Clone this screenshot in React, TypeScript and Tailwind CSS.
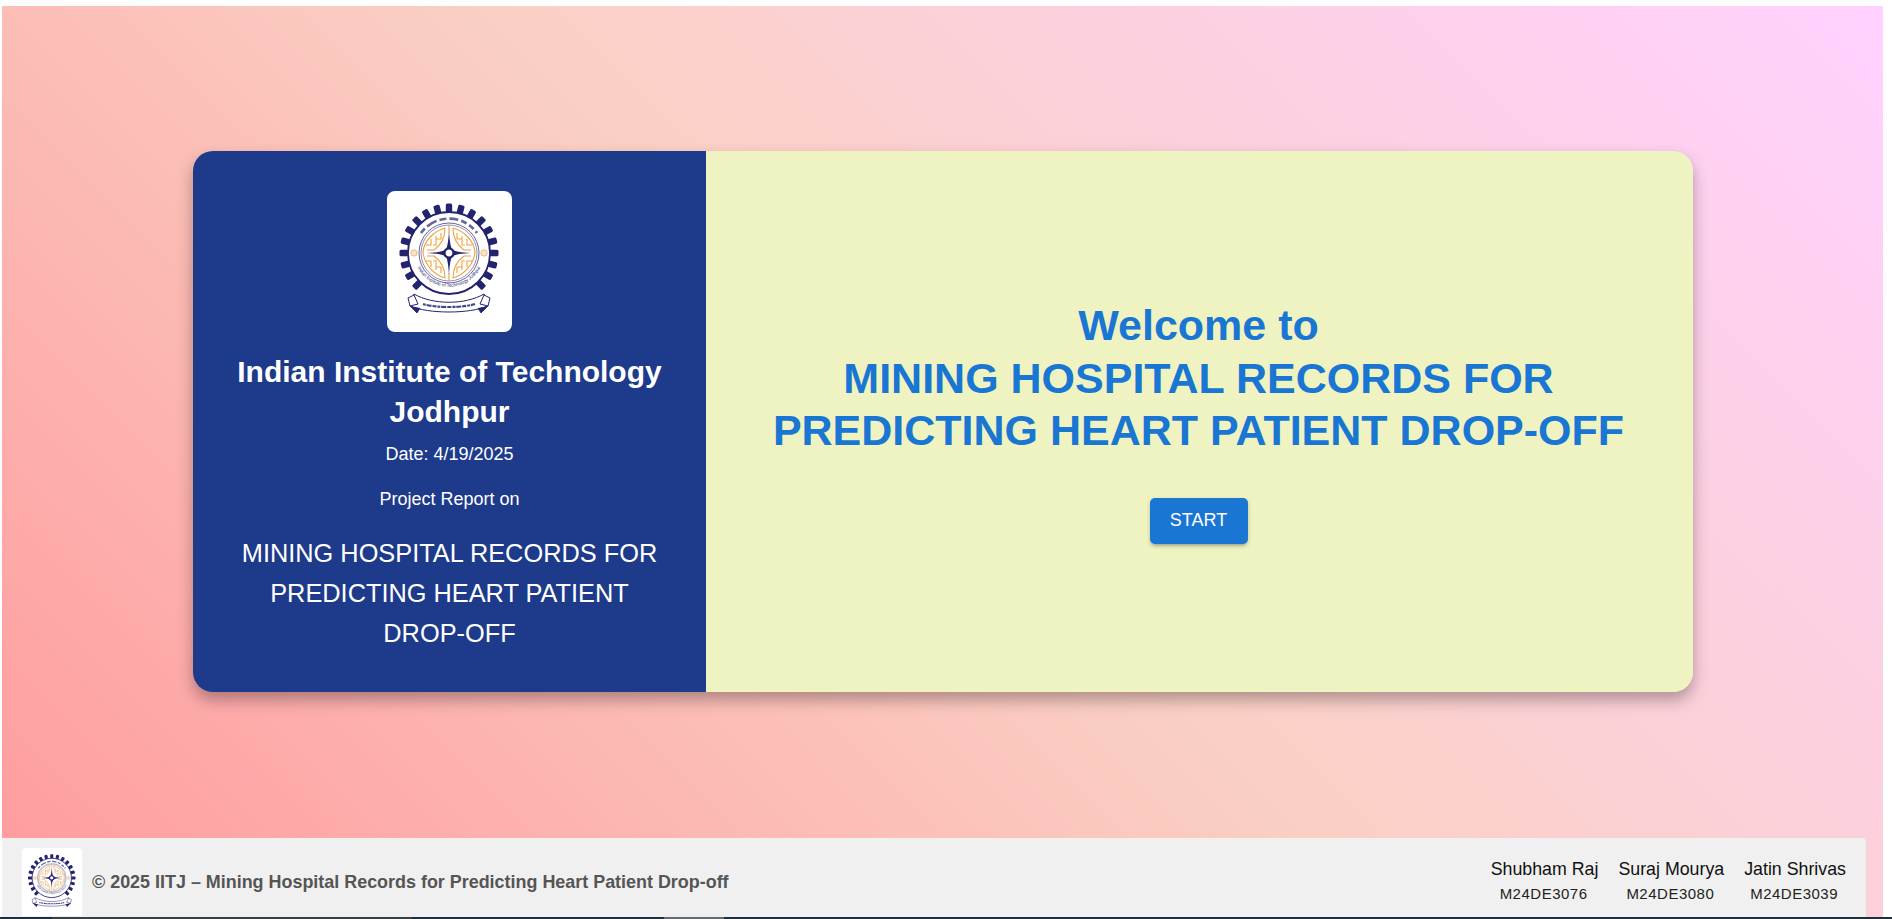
const students = [
  { name: 'Shubham Raj', roll: 'M24DE3076' },
  { name: 'Suraj Mourya', roll: 'M24DE3080' },
  { name: 'Jatin Shrivas', roll: 'M24DE3039' },
]

const teeth = Array.from({ length: 24 }, (_, i) => i * 15).filter((a) => a < 150 || a > 210)

function Logo({ id }: { id: string }) {
  return (
    <svg viewBox="0 0 125 141" className="h-full w-full">
      <g transform="translate(62 62)">
        {teeth.map((angle) => (
          <rect key={angle} x="-3.2" y="-49.5" width="6.4" height="9" rx="1.5" fill="#23236f" transform={`rotate(${angle})`} />
        ))}
        <circle r="41" fill="#fff" stroke="#23236f" strokeWidth="1.8" />
        <circle r="30" fill="none" stroke="#23236f" strokeWidth="0.7" />
        <circle r="28" fill="none" stroke="#23236f" strokeWidth="0.5" />
        <path d="M-28 -20A34.4 34.4 0 0 1 28 -20" fill="none" stroke="#23236f" strokeWidth="2.6" strokeDasharray="6 3 11 3 7 3 9 3 6 3" opacity="0.7" />
        <path id={id} d="M-32 13A35 35 0 0 0 32 13" fill="none" />
        <text fontSize="4.6" fill="#23236f" fontFamily="Liberation Sans, sans-serif">
          <textPath href={`#${id}`} startOffset="50%" textAnchor="middle">
            Indian Institute of Technology Jodhpur
          </textPath>
        </text>
        <circle cx="-35" r="3.2" fill="#fbe3c4" stroke="#d9a05a" strokeWidth="0.6" />
        <circle cx="35" r="3.2" fill="#fbe3c4" stroke="#d9a05a" strokeWidth="0.6" />
        <g fill="none" stroke="#f0a03c" strokeWidth="1.1">
          <path d="M-4 -25C-15 -22 -25 -12 -26 -1C-25 11 -15 22 -4 25C-4 16 -8 8 -15 3H-22M-4 -25C-4 -16 -8 -8 -15 -3H-22" />
          <path d="M-8 -20V-14H-13V-9M-13 -17V-13M-18 -14V-8H-23M-12 -8H-16M-8 20V14H-13V9M-13 17V13M-18 14V8H-23M-12 8H-16" />
          <path d="M4 -25C15 -22 25 -12 26 -1C25 11 15 22 4 25C4 16 8 8 15 3H22M4 -25C4 -16 8 -8 15 -3H22" />
          <path d="M8 -20V-14H13V-9M13 -17V-13M18 -14V-8H23M12 -8H16M8 20V14H13V9M13 17V13M18 14V8H23M12 8H16" />
          <path d="M0 -28V-20M0 28V20" stroke="#d9a05a" />
        </g>
        <path d="M0 -22C0.8 -10 2 -4 3.5 -3.5C5 -1.5 12 -0.6 22 0C12 0.6 5 1.5 3.5 3.5C2 4 0.8 10 0 22C-0.8 10 -2 4 -3.5 3.5C-5 1.5 -12 0.6 -22 0C-12 -0.6 -5 -1.5 -3.5 -3.5C-2 -4 -0.8 -10 0 -22Z" fill="#23236f" />
        <circle r="4.6" fill="#fff" stroke="#23236f" strokeWidth="2.4" />
      </g>
      <path d="M27 103C46 114 78 114 97 103L101 115C82 123 42 123 23 115Z" fill="#fff" stroke="#23236f" strokeWidth="1" />
      <path d="M27 104L21 107L23 115L31 113ZM97 104L103 107L101 115L93 113Z" fill="#fff" stroke="#23236f" strokeWidth="1" />
      <path d="M23 115L30 122L33 117M101 115L94 122L91 117" fill="#23236f" stroke="#23236f" strokeWidth="0.8" />
      <path d="M36 113C48 117 76 117 88 113" fill="none" stroke="#23236f" strokeWidth="2.2" strokeDasharray="3 0.8 5 1 4 1" opacity="0.85" />
    </svg>
  )
}

export default function App() {
  return (
    <div className="flex h-[919px] flex-col overflow-hidden bg-white pt-[6px] font-['Liberation_Sans',Arial,sans-serif]">
      <div className="ml-[2px] mr-[9px] flex flex-1 flex-col bg-[linear-gradient(45deg,#ff9a9e,#fad0c4,#ffd1ff)]">
        <main className="flex flex-1 items-start pl-[191px] pt-[145px]">
          <div className="flex h-[541px] w-[1500px] overflow-hidden rounded-[20px] shadow-[0_8px_16px_rgba(0,0,0,0.3)]">
            <section className="flex w-[513px] flex-col items-center bg-[#1e3a8a] px-6 pt-10 text-center text-white">
              <div className="h-[141px] w-[125px] rounded-lg bg-white">
                <Logo id="ring-main" />
              </div>
              <h2 className="mt-[20px] text-[30px] font-bold leading-[40px]">
                Indian Institute of Technology Jodhpur
              </h2>
              <p className="mt-[8px] text-[18px] leading-[28px]">Date: 4/19/2025</p>
              <p className="mt-[17px] text-[18px] leading-[28px]">Project Report on</p>
              <p className="mt-[20px] text-[25.35px] leading-[40px]">
                MINING HOSPITAL RECORDS FOR
                <br />
                PREDICTING HEART PATIENT
                <br />
                DROP-OFF
              </p>
            </section>
            <section className="flex flex-1 flex-col items-center bg-[#eff3c1] pr-[2px] pt-[148px] text-center">
              <h1 className="text-[43px] font-bold leading-[52.5px] text-[#1976d2]">
                Welcome to
                <br />
                MINING HOSPITAL RECORDS FOR
                <br />
                PREDICTING HEART PATIENT DROP-OFF
              </h1>
              <button className="mt-[41px] h-[46px] w-[98px] rounded-[5px] bg-[#1976d2] text-[18px] text-white shadow-[0_3px_3px_-2px_rgba(0,0,0,0.2),0_2px_4px_rgba(0,0,0,0.2)]">
                START
              </button>
            </section>
          </div>
        </main>
        <footer className="mr-[17px] flex h-[79px] items-end justify-between rounded-tr-sm bg-[#f0f0f0] pl-5 pr-5">
          <div className="flex items-center gap-[10px] pb-px">
            <div className="h-[68px] w-[60px] rounded-t bg-white">
              <Logo id="ring-footer" />
            </div>
            <p className="text-[17.93px] font-bold text-[#555]">
              © 2025 IITJ – Mining Hospital Records for Predicting Heart Patient Drop-off
            </p>
          </div>
          <div className="flex gap-5 self-center pt-[5px]">
            {students.map((student) => (
              <div key={student.roll} className="text-center">
                <div className="text-[17.8px] leading-[28px] text-[#111]">{student.name}</div>
                <div className="pr-[2px] text-[15px] leading-[22px] tracking-[0.5px] text-[#222]">{student.roll}</div>
              </div>
            ))}
          </div>
        </footer>
      </div>
      <div className="flex h-[2px] bg-[#1c2f3a]">
        <div className="w-[52px]" />
        <div className="w-[360px] bg-[#3a3f44]" />
        <div className="w-[252px]" />
        <div className="w-[60px] bg-[#666b70]" />
      </div>
    </div>
  )
}
